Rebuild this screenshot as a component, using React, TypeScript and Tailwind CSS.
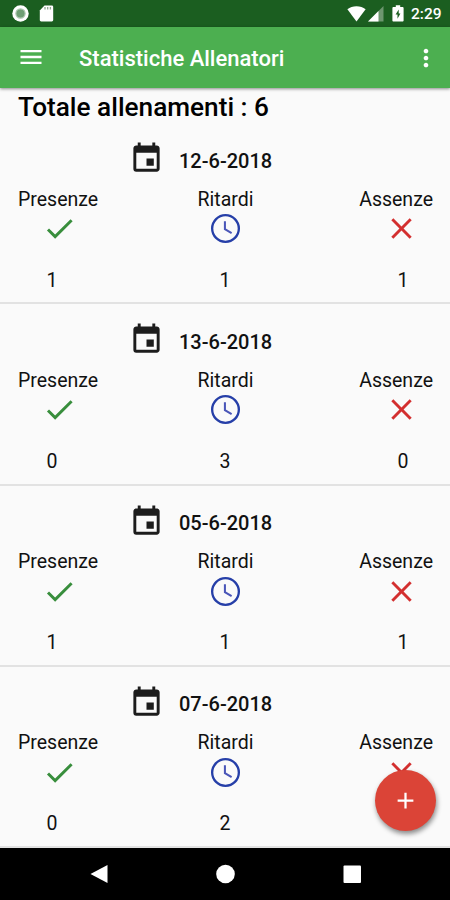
import { MdAdd, MdCheck, MdClose, MdEvent, MdMenu, MdMoreVert } from 'react-icons/md';

const sessions = [
  { date: '12-6-2018', present: 1, late: 1, absent: 1 },
  { date: '13-6-2018', present: 0, late: 3, absent: 0 },
  { date: '05-6-2018', present: 1, late: 1, absent: 1 },
  { date: '07-6-2018', present: 0, late: 2, absent: 1 },
];

function StatusBar() {
  return (
    <div className="flex h-[27px] shrink-0 items-center bg-[#1b5e20] pl-3 pr-2 text-white">
      <svg width="17" height="17" viewBox="0 0 17 17">
        <circle cx="8.5" cy="8.5" r="8.2" fill="#fff" />
        <circle cx="8.5" cy="8.5" r="4.600" fill="#6f9f74" stroke="#a9c6ac" strokeWidth="1.200" />
      </svg>
      <svg className="ml-[10px]" width="15" height="17" viewBox="0 0 15 17">
        <path d="M5.5.5h7.3c.8 0 1.4.6 1.4 1.4v13.2c0 .8-.6 1.4-1.4 1.4H2.2c-.8 0-1.4-.6-1.4-1.4V5.5z" fill="#fff" />
        <path d="M6 2v2.500M8.700 2v2.500M11.400 2v2.500" stroke="#8fa891" strokeWidth="1.300" />
      </svg>
      <div className="grow" />
      <svg width="19" height="16" viewBox="0 0 20 16" preserveAspectRatio="none">
        <path d="M10 15.500.400 3.200C3 1.300 6.300.3 10 .3s7 1 9.600 2.900z" fill="#fff" />
      </svg>
      <svg className="ml-[2px]" width="16" height="16" viewBox="0 0 16 16">
        <path d="M0 15.500 15.500 0v15.500z" fill="#6d966f" />
        <path d="M0 15.500 10.500 5v10.500z" fill="#fff" />
      </svg>
      <svg className="ml-[8px]" width="12" height="17" viewBox="0 0 12 17">
        <path d="M3.800.3h4.400V2h2.300c.6 0 1.100.5 1.100 1.100v12.300c0 .6-.5 1.100-1.100 1.100h-9c-.6 0-1.100-.5-1.100-1.100V3.100C.4 2.500.9 2 1.500 2h2.300z" fill="#fff" />
        <path d="M6.700 4.600 3.600 9.600h1.900V13.700L8.400 8.600H6.700z" fill="#1b5e20" />
      </svg>
      <span className="ml-[7px] w-[31px] whitespace-nowrap pt-[2px] text-[15.500px] font-medium leading-[27px]">2:29</span>
    </div>
  );
}

function ClockIcon() {
  return (
    <svg width="35" height="35" viewBox="0 0 24 24" fill="none">
      <circle cx="12" cy="12" r="9.150" stroke="#263fa8" strokeWidth="1.600" />
      <path d="M11.600 7v5.500l4.600 2.700" stroke="#4a56b8" strokeWidth="1.400" />
    </svg>
  );
}

function SessionRow({ session }: { session: (typeof sessions)[number] }) {
  return (
    <div className="h-[181.300px] shrink-0 border-b-2 border-[#e2e2e2] pt-[18px]">
      <div className="flex h-[35px] pl-[129px]">
        <MdEvent size={35} color="#1c1c1c" />
        <span className="ml-[15px] pt-[2.500px] text-[20px] font-medium leading-[34px]">{session.date}</span>
      </div>
      <div className="grid h-[35px] grid-cols-[1fr_auto_1fr] pl-[18px] pr-[17px] pt-[11.500px] text-[19.500px] leading-[24px]">
        <span>Presenze</span>
        <span>Ritardi</span>
        <span className="text-right">Assenze</span>
      </div>
      <div className="grid h-[35px] grid-cols-[1fr_35px_1fr] pl-[42px] pr-[41px]">
        <MdCheck size={35} color="#388e3c" />
        <ClockIcon />
        <MdClose className="-mr-[9.500px] ml-auto" size={35} color="#d32f2f" />
      </div>
      <div className="grid grid-cols-[1fr_30px_1fr] px-[37px] pt-[22.500px] text-center text-[19.500px] leading-[24px]">
        <span className="w-[30px]">{session.present}</span>
        <span>{session.late}</span>
        <span className="-mr-[5px] ml-auto w-[30px]">{session.absent}</span>
      </div>
    </div>
  );
}

export default function App() {
  return (
    <div className="relative flex h-[900px] w-[450px] flex-col overflow-hidden bg-[#fafafa] font-[Roboto,sans-serif] text-[#111]">
      <StatusBar />

      {/* App bar */}
      <header className="z-10 flex h-[61px] shrink-0 items-center bg-[#4caf50] pl-[17px] pr-[10px] text-white shadow-[0_1px_3px_rgba(0,0,0,0.45)]">
        <MdMenu className="-mt-[2px]" size={28} />
        <h1 className="ml-[34px] grow pt-[2px] text-[22px] font-medium">Statistiche Allenatori</h1>
        <MdMoreVert size={28} />
      </header>

      {/* Session list */}
      <main className="flex min-h-0 grow flex-col overflow-hidden">
        <h2 className="h-[35px] shrink-0 pl-[18px] pt-[3px] text-[26.200px] font-medium leading-[32px] text-black">
          Totale allenamenti : 6
        </h2>
        {sessions.map((session) => (
          <SessionRow key={session.date} session={session} />
        ))}
      </main>

      <button className="absolute bottom-[69px] right-[14px] flex size-[61px] items-center justify-center rounded-full bg-[#db4437] text-white shadow-[1px_3px_5px_rgba(0,0,0,0.45)]">
        <MdAdd size={27} />
      </button>

      {/* System navigation */}
      <nav className="h-[52px] shrink-0 bg-black">
        <svg width="450" height="52" viewBox="0 0 450 52" fill="#fff">
          <path d="M90.500 26 107.500 17v18z" />
          <circle cx="225.500" cy="26" r="9.300" />
          <rect x="343.500" y="17.500" width="17.500" height="17.500" rx="1" />
        </svg>
      </nav>
    </div>
  );
}
